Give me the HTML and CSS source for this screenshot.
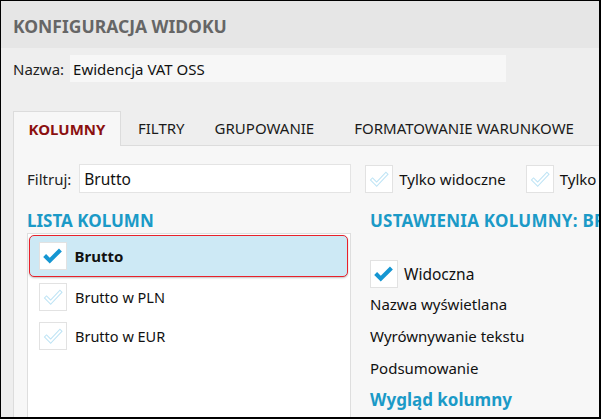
FILE: index.html
```html
<!DOCTYPE html>
<html lang="pl">
<head>
<meta charset="utf-8">
<link rel="stylesheet" href="styles.css">
</head>
<body>
<div class="frame">
  <header class="header"><h1 class="title">KONFIGURACJA WIDOKU</h1></header>
  <div class="name-row">
    <span class="label">Nazwa:</span>
    <div class="name-input">Ewidencja VAT OSS</div>
  </div>
  <nav class="tabs">
    <div class="tab active">KOLUMNY</div>
    <div class="tab t-filtry">FILTRY</div>
    <div class="tab t-grup">GRUPOWANIE</div>
    <div class="tab t-format">FORMATOWANIE WARUNKOWE</div>
  </nav>
  <section class="panel">
    <div class="filter-row">
      <span class="label">Filtruj:</span>
      <div class="filter-input">Brutto</div>
      <div class="cb-wrap cb-first">
        <span class="cb"><svg viewBox="0 0 28 28"><path class="ck-o1" d="M7 15 L11.5 19.5 L21.5 9"/><path class="ck-o2" d="M7 15 L11.5 19.5 L21.5 9"/></svg></span>
        <span class="cb-label">Tylko widoczne</span>
      </div>
      <div class="cb-wrap cb-second">
        <span class="cb"><svg viewBox="0 0 28 28"><path class="ck-o1" d="M7 15 L11.5 19.5 L21.5 9"/><path class="ck-o2" d="M7 15 L11.5 19.5 L21.5 9"/></svg></span>
        <span class="cb-label">Tylko zaznaczone</span>
      </div>
    </div>
    <div class="columns">
      <div class="col-left">
        <h2 class="section-title">LISTA KOLUMN</h2>
        <div class="list">
          <div class="row selected">
            <span class="cb"><svg viewBox="0 0 28 28"><path class="ck-on" d="M5 13.5 L10.5 19 L22 7.5"/></svg></span>
            <span class="row-label bold">Brutto</span>
          </div>
          <div class="row">
            <span class="cb"><svg viewBox="0 0 28 28"><path class="ck-o1" d="M7 15 L11.5 19.5 L21.5 9"/><path class="ck-o2" d="M7 15 L11.5 19.5 L21.5 9"/></svg></span>
            <span class="row-label">Brutto w PLN</span>
          </div>
          <div class="row">
            <span class="cb"><svg viewBox="0 0 28 28"><path class="ck-o1" d="M7 15 L11.5 19.5 L21.5 9"/><path class="ck-o2" d="M7 15 L11.5 19.5 L21.5 9"/></svg></span>
            <span class="row-label">Brutto w EUR</span>
          </div>
        </div>
      </div>
      <div class="col-right">
        <h2 class="section-title wide">USTAWIENIA KOLUMNY: BRUTTO</h2>
        <div class="setting visible">
          <span class="cb"><svg viewBox="0 0 28 28"><path class="ck-on" d="M5 13.5 L10.5 19 L22 7.5"/></svg></span>
          <span class="cb-label">Widoczna</span>
        </div>
        <div class="setting">Nazwa wyświetlana</div>
        <div class="setting">Wyrównywanie tekstu</div>
        <div class="setting">Podsumowanie</div>
        <h3 class="sub-title">Wygląd kolumny</h3>
      </div>
    </div>
  </section>
</div>
</body>
</html>
```

FILE: styles.css
```css
* { box-sizing: border-box; margin: 0; padding: 0; }
html, body { width: 601px; height: 419px; overflow: hidden; background: #000; }
body { font-family: "Noto Sans", "Open Sans", sans-serif; color: #111; font-size: 15px; }
.frame {
  width: 601px; height: 419px;
  border-style: solid; border-color: #000;
  border-width: 1px 2px 2px 1px;
  background: #eeeeee;
  overflow: hidden;
}
.header { height: 47px; background: #e6e6e6; display: flex; align-items: center; padding-left: 12px; }
.title { font-size: 17.5px; font-weight: 700; color: #666; padding-top: 2px; white-space: nowrap; }
.name-row { display: flex; align-items: center; margin-top: 7px; padding-left: 12px; height: 27px; }
.label { font-size: 15px; color: #222; flex: none; }
.name-input { flex: none; margin-left: 6px; width: 436px; height: 27px; background: #f7f7f7; display: flex; align-items: center; padding-left: 3px; font-size: 15px; }
.tabs { display: flex; margin: 29px 0 0 12px; height: 35px; border-bottom: 1px solid #dcdcdc; white-space: nowrap; }
.tab { flex: none; font-size: 15px; color: #1a1a1a; display: flex; align-items: center; height: 34px; }
.tab.active { width: 108px; background: #f7f7f7; border: 1px solid #dcdcdc; border-bottom: none; color: #8b1010; font-weight: 700; justify-content: center; height: 35px; margin-bottom: -1px; }
.t-filtry { margin-left: 17px; }
.t-grup { margin-left: 30px; }
.t-format { margin-left: 40px; }
.panel { margin-left: 12px; width: 620px; height: 300px; background: #f7f7f7; border-left: 1px solid #dcdcdc; padding: 18px 0 0 13px; }
.filter-row { display: flex; align-items: center; height: 29px; white-space: nowrap; }
.filter-input { flex: none; margin-left: 8px; width: 272px; height: 29px; background: #fff; border: 1px solid #e4e4e4; display: flex; align-items: center; padding-left: 4px; font-size: 15.5px; }
.cb-wrap { display: flex; align-items: center; flex: none; }
.cb-first { margin-left: 14px; }
.cb-second { margin-left: 20px; }
.cb { width: 28px; height: 28px; background: #fff; border: 1px solid #e2e2e2; display: inline-flex; flex: none; }
.cb svg { width: 26px; height: 26px; }
.ck-o1 { fill: none; stroke: #bfe4f5; stroke-width: 4.2; stroke-linejoin: miter; stroke-linecap: square; }
.ck-o2 { fill: none; stroke: #fff; stroke-width: 2; stroke-linejoin: miter; stroke-linecap: square; }
.ck-on { fill: none; stroke: #1596d2; stroke-width: 4.4; stroke-linejoin: miter; stroke-linecap: butt; }
.cb-label { margin-left: 6px; font-size: 15px; color: #111; }
.columns { display: flex; margin-top: 17px; }
.col-left { width: 324px; flex: none; }
.col-right { margin-left: 19px; white-space: nowrap; }
.section-title { font-size: 17px; font-weight: 700; color: #1b9ac7; height: 22px; line-height: 22px; white-space: nowrap; }
.section-title.wide { letter-spacing: 0.25px; }
.list { margin-top: 1px; height: 200px; background: #fff; border: 1px solid #dedede; padding: 1px 2px 0 1px; }
.row { display: flex; align-items: center; height: 39px; padding-left: 10px; }
.row.selected { height: 42px; background: #cde9f5; border: 1.5px solid #e8212b; border-radius: 5px; box-shadow: 0 1px 2px rgba(0,0,0,0.25); padding-left: 8.5px; }
.row-label { margin-left: 8px; font-size: 14.5px; }
.bold { font-weight: 700; font-size: 15px; }
.setting { font-size: 15px; color: #111; height: 32px; display: flex; align-items: center; }
.setting.visible { margin-top: 27px; height: 29px; }
.setting.visible .cb-label { font-size: 15.5px; }
.sub-title { font-size: 17px; font-weight: 700; color: #1b9ac7; line-height: 24px; margin-top: 4px; white-space: nowrap; }
```
